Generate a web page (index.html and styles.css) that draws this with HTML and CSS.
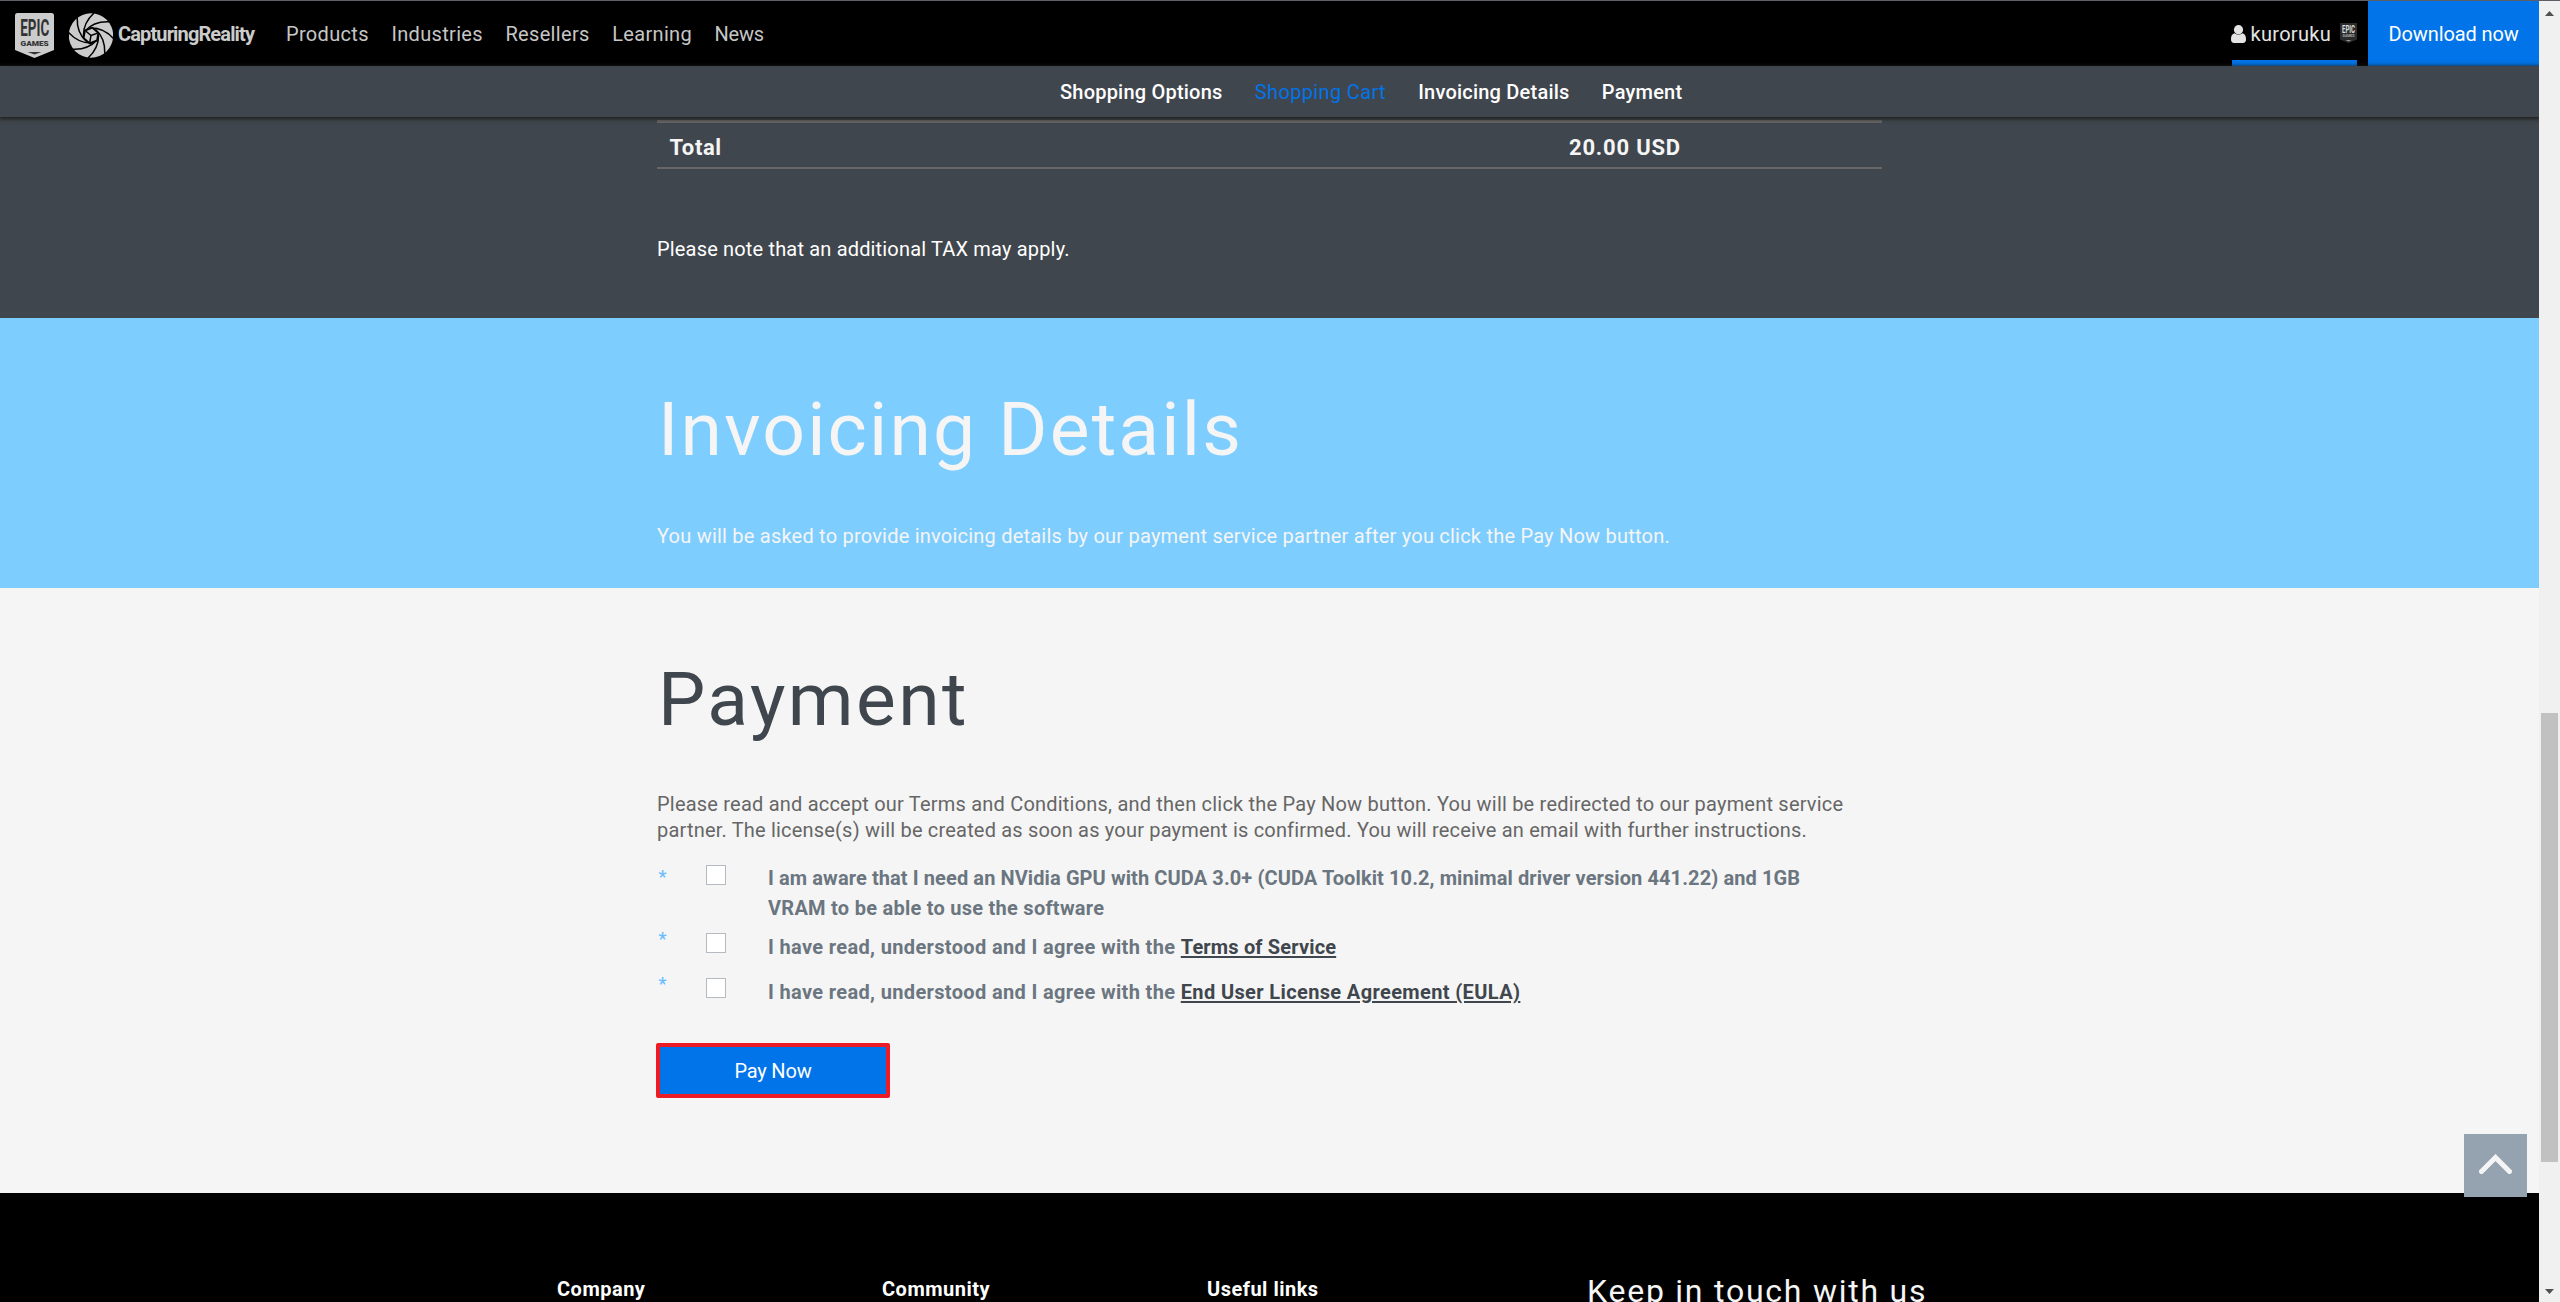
FILE: index.html
```html
<!DOCTYPE html>
<html lang="en">
<head>
<meta charset="utf-8">
<title>CapturingReality</title>
<link rel="stylesheet" href="styles.css">
</head>
<body>
<div class="page">
  <header class="topbar">
    <svg class="epic-logo" viewBox="0 0 39 45" width="39" height="45">
      <path d="M2.5 0h34A2.5 2.5 0 0 1 39 2.5V37L19.500 45 0 37V2.500A2.500 2.500 0 0 1 2.500 0z" fill="#ccc"/>
      <text x="5.300" y="23.200" font-size="24" font-weight="700" textLength="29" lengthAdjust="spacingAndGlyphs" fill="#333">EPIC</text>
      <text x="5.500" y="32.600" font-size="7.600" font-weight="900" textLength="28.300" lengthAdjust="spacingAndGlyphs" fill="#333">GAMES</text>
      <path d="M12.500 39h14l-7 2.600z" fill="#333"/>
    </svg>
    <svg class="cr-logo" viewBox="-22 -22.500 44 45" width="44" height="45">
      <circle r="22.200" fill="#ccc"/>
      <g fill="none" stroke="#000" stroke-width="1.500">
        <path id="blade" d="M3 -22.500C-3 -17 -8 -9 -7.500 1"/>
        <use href="#blade" transform="rotate(45)"/>
        <use href="#blade" transform="rotate(90)"/>
        <use href="#blade" transform="rotate(135)"/>
        <use href="#blade" transform="rotate(180)"/>
        <use href="#blade" transform="rotate(225)"/>
        <use href="#blade" transform="rotate(270)"/>
        <use href="#blade" transform="rotate(315)"/>
      </g>
      <g transform="rotate(10)">
        <path d="M0 -8.800L7.600 -4.400V4.400L0 8.800L-7.600 4.400V-4.400z" fill="#000"/>
        <path d="M0 -6.800L5.900 -3.400V3.400L0 6.800L-5.900 3.400V-3.400z" fill="#ccc"/>
        <path d="M0 7V0L-6 -3.500M0 0L6 -3.500" fill="none" stroke="#000" stroke-width="1.500"/>
      </g>
    </svg>
    <span class="brand">CapturingReality</span>
    <nav class="main-nav">
      <a>Products</a><a>Industries</a><a>Resellers</a><a>Learning</a><a class="news">News</a>
    </nav>
    <div class="account">
      <svg class="user-icon" viewBox="0 0 15 18" width="15" height="18">
        <path d="M3.600 8.300C1 8.800 0 11 0 14.500C0 16.800 1.200 18 3 18h9c1.800 0 3-1.200 3-3.500C15 11 14 8.800 11.400 8.300C9.500 10 5.500 10 3.600 8.300z" fill="#e4e4e4"/>
        <circle cx="7.500" cy="4.700" r="4.600" fill="#e4e4e4"/>
      </svg>
      <span class="username">kuroruku</span>
      <svg class="epic-mini" viewBox="0 0 17 20" width="17" height="20">
        <path d="M0 0h17v16.500L8.500 20 0 16.500z" fill="#2c2c2c"/>
        <text x="2" y="10" font-size="11" font-weight="700" textLength="13" lengthAdjust="spacingAndGlyphs" fill="#ddd">EPIC</text>
        <text x="2.500" y="14.200" font-size="3.600" font-weight="700" textLength="12" lengthAdjust="spacingAndGlyphs" fill="#aaa">GAMES</text>
        <path d="M5.500 17h6l-3 1.500z" fill="#999"/>
      </svg>
    </div>
    <a class="download">Download now</a>
  </header>
  <nav class="steps">
    <a>Shopping Options</a><a class="active">Shopping Cart</a><a>Invoicing Details</a><a>Payment</a>
  </nav>
  <section class="cart">
    <div class="total"><span>Total</span><span class="amount">20.00 USD</span></div>
    <p class="tax-note">Please note that an additional TAX may apply.</p>
  </section>
  <section class="invoicing">
    <h2>Invoicing Details</h2>
    <p>You will be asked to provide invoicing details by our payment service partner after you click the Pay Now button.</p>
  </section>
  <section class="payment">
    <h2>Payment</h2>
    <p>Please read and accept our Terms and Conditions, and then click the Pay Now button. You will be redirected to our payment service<br><span class="second">partner. The license(s) will be created as soon as your payment is confirmed. You will receive an email with further instructions.</span></p>
    <div class="agree first">
      <span class="star">*</span><span class="box"></span>
      <div class="label"><span class="gpu">I am aware that I need an NVidia GPU with CUDA 3.0+ (CUDA Toolkit 10.2, minimal driver version 441.22) and 1GB</span><br>VRAM to be able to use the software</div>
    </div>
    <div class="agree">
      <span class="star">*</span><span class="box"></span>
      <div class="label"><span class="read">I have read, understood and I agree with the </span><a>Terms of Service</a></div>
    </div>
    <div class="agree last">
      <span class="star">*</span><span class="box"></span>
      <div class="label"><span class="read">I have read, understood and I agree with the </span><a class="eula">End User License Agreement (EULA)</a></div>
    </div>
    <button class="pay">Pay Now</button>
  </section>
  <footer class="footer">
    <h4>Company</h4><h4>Community</h4><h4>Useful links</h4><h3>Keep in touch with us</h3>
  </footer>
  <a class="to-top">
    <svg viewBox="0 0 33 20" width="33" height="20"><path d="M2.500 17.500L16.500 3.500L30.500 17.500" fill="none" stroke="#f5f5f5" stroke-width="5" stroke-linecap="round"/></svg>
  </a>
</div>
<div class="scrollbar">
  <svg viewBox="0 0 9 5" width="9" height="5"><path d="M0 5L4.500 0L9 5z" fill="#505050"/></svg>
  <div class="thumb"></div>
  <svg class="down" viewBox="0 0 9 5" width="9" height="5"><path d="M0 0L4.500 5L9 0z" fill="#505050"/></svg>
</div>
</body>
</html>
```
FILE: styles.css
```css
* { box-sizing: border-box; }
body {
  margin: 0;
  height: 1302px;
  display: grid;
  grid-template-columns: 2539px 21px;
  overflow: hidden;
  font: 400 20px/26px Roboto, sans-serif;
  background: #f5f5f5;
}
h2, h3, h4, p { margin: 0; }
.page { position: relative; height: 1302px; overflow: hidden; }

.topbar {
  height: 66px;
  padding-left: 15px;
  display: flex;
  border-top: 1px solid #5f6065;
  background: #000;
  color: #c6c6c6;
  font-weight: 500;
  line-height: 66px;
  white-space: nowrap;
}
.epic-logo { margin-top: 12px; }
.cr-logo { margin: 12px 0 0 15px; }
.brand { width: 173px; padding-left: 5px; font-weight: 700; letter-spacing: -0.870px; color: #ccc; }
.main-nav { display: flex; gap: 22.500px; letter-spacing: 0.330px; font-weight: 400; }
.news { letter-spacing: -0.200px; }
.account {
  width: 125px;
  height: 65px;
  margin-left: auto;
  display: flex;
  border-bottom: 6px solid #0074e8;
  color: #e4e4e4;
}
.user-icon { margin: 24px 0 0 -1px; }
.username { width: 93px; padding-left: 4.500px; letter-spacing: 0.300px; font-weight: 400; }
.epic-mini { flex: none; margin: 22px 0 0 1px; }
.download {
  width: 171px;
  height: 65px;
  margin-left: 11px;
  padding-left: 20.500px;
  background: #0074e8;
  color: #fff;
  letter-spacing: -0.100px;
  font-weight: 400;
}

.steps {
  position: relative;
  height: 51px;
  padding-left: 1060px;
  display: flex;
  gap: 32.300px;
  background: #40464d;
  box-shadow: 0 1px 4px 1px #1e1e1c;
  color: #fff;
  font-weight: 500;
  line-height: 52px;
  letter-spacing: 0.210px;
}
.steps .active { color: #0074e8; font-weight: 400; letter-spacing: 0.350px; }

.cart { height: 201px; padding: 3px 657px 0; background: #40464d; color: #f5f5f5; }
.total {
  height: 49px;
  padding-left: 12.500px;
  display: flex;
  border-top: 3px solid #666;
  border-bottom: 2px solid #666;
  font-size: 22px;
  font-weight: 700;
  line-height: 49px;
  letter-spacing: 0.600px;
}
.total span:first-child { width: 899.500px; }
.amount { letter-spacing: 0.800px; }
.tax-note { margin-top: 67px; letter-spacing: 0.170px; color: #fff; }

h2 { margin-left: 1px; font-weight: 400; font-size: 75px; line-height: 90px; letter-spacing: 2.200px; }
.invoicing { height: 270px; padding: 66px 0 0 657px; background: #7ecdff; color: #f5f5f5; }
.invoicing p { margin-top: 49px; letter-spacing: 0.220px; }

.payment { height: 605px; padding: 66px 0 0 657px; background: #f5f5f5; color: #666; }
.payment h2 { color: #40464d; letter-spacing: 2.400px; }
.payment p { margin-top: 47px; letter-spacing: 0.206px; }
.payment .second { letter-spacing: 0.190px; }
.agree { display: grid; grid-template-columns: 49px 61px auto; }
.first { margin: 20px 0 9px; }
.last { margin-top: 15px; }
.star { height: 20px; margin: -3px 0 0 1.500px; font-size: 18px; line-height: 20px; font-weight: 500; color: #6bbcff; }
.first .star { margin-top: 4px; }
.box { width: 20px; height: 20px; margin-top: 1px; border: 1px solid #b5bac0; background: #fff; }
.first .box { margin-top: 2px; }
.label { padding-left: 1px; line-height: 30px; font-weight: 700; color: #6b7680; letter-spacing: 0.260px; }
.gpu { letter-spacing: 0.097px; }
.read { letter-spacing: 0.350px; }
.label a { color: #40464d; text-decoration: underline; text-decoration-thickness: 2px; text-underline-offset: 2px; letter-spacing: 0.160px; }
.label .eula { letter-spacing: 0.370px; }
.pay {
  display: block;
  width: 234px;
  height: 55px;
  margin: 36px 0 0 -1px;
  padding: 2px 0 0;
  border: 4px solid #ed1c24;
  border-radius: 2px;
  background: #0074e8;
  color: #fff;
  font: 400 20px/45px Roboto, sans-serif;
  letter-spacing: -0.200px;
}

.footer {
  height: 109px;
  padding: 78px 0 0 557px;
  display: grid;
  grid-template-columns: 325px 325px 380px 400px;
  background: #000;
  color: #fff;
}
.footer h4 { margin-top: 5px; font-size: 20px; line-height: 26px; font-weight: 700; letter-spacing: 0.500px; }
.footer h3 { font-size: 32px; font-weight: 400; line-height: 40px; letter-spacing: 1.760px; color: #f5f5f5; }

.to-top {
  position: absolute;
  right: 12px;
  top: 1134px;
  width: 63px;
  height: 63px;
  padding: 20px 0 0 15px;
  background: #95a2b0;
}
.to-top svg { display: block; }

.scrollbar {
  height: 1302px;
  padding-top: 10px;
  display: flex;
  flex-direction: column;
  align-items: center;
  border-top: 1px solid #5f6065;
  background: #f0f0f0;
}
.scrollbar svg { flex: none; }
.thumb { width: 17px; height: 449px; margin: 697px 2px 0; background: #c1c1c1; }
.down { margin-top: 127px; }
```
